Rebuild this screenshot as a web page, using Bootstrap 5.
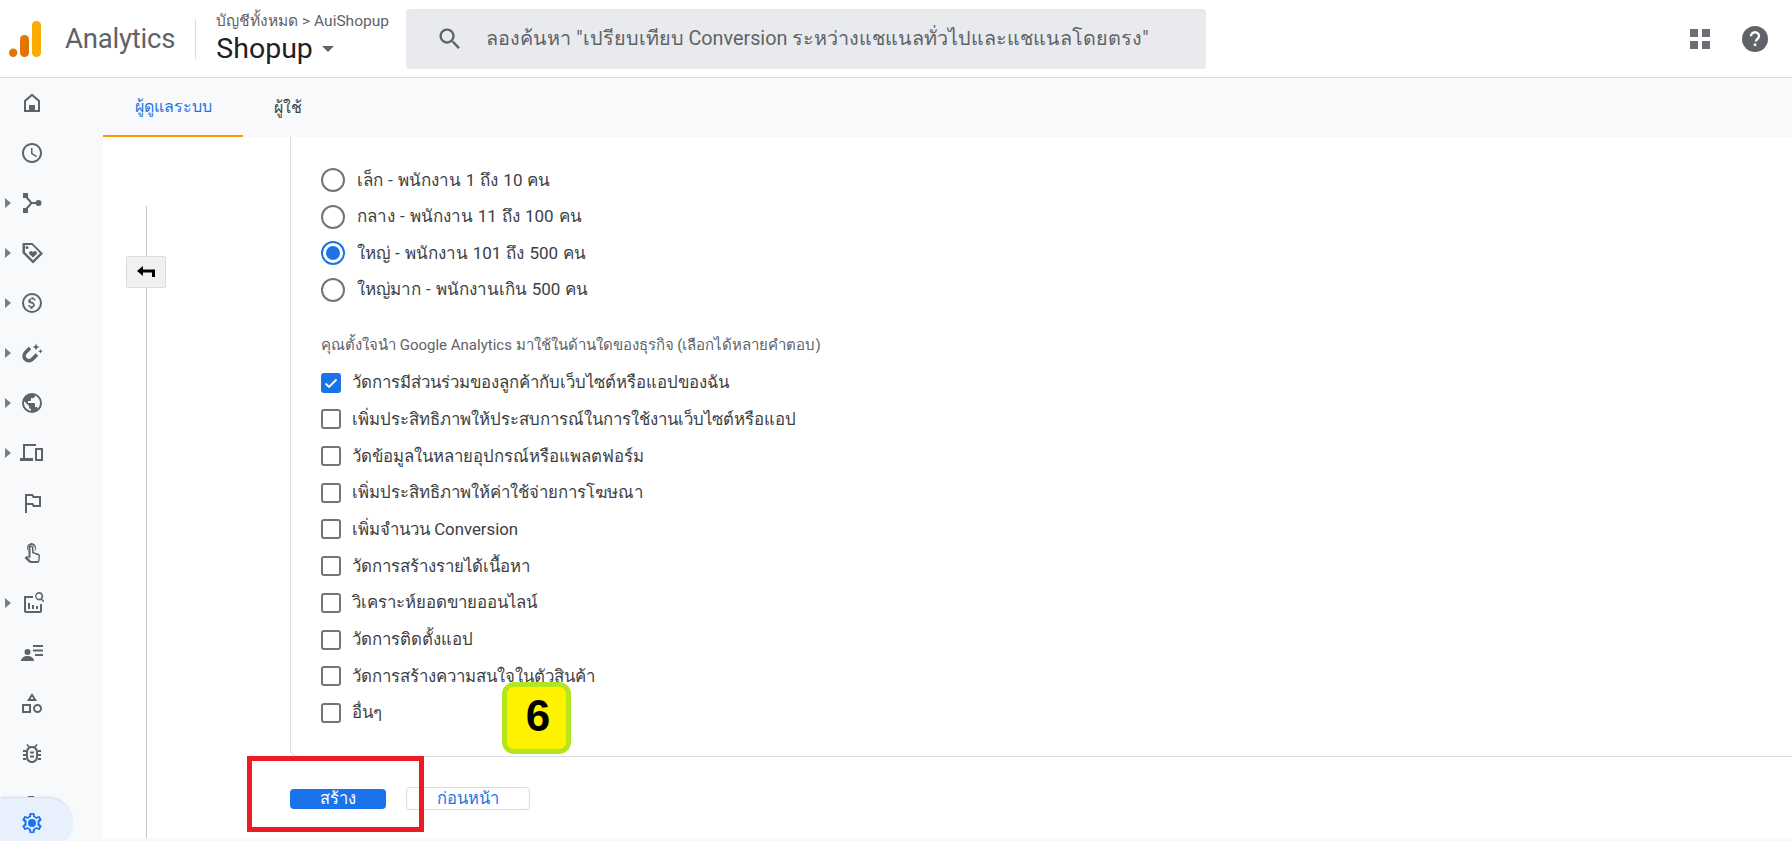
<!doctype html>
<html lang="th">
<head>
<meta charset="utf-8">
<title>Analytics</title>
<link href="https://cdn.jsdelivr.net/npm/bootstrap@5.3.0/dist/css/bootstrap.min.css" rel="stylesheet">
<style>
html,body{height:841px;overflow:hidden}
body{font-family:Roboto,"Noto Sans",sans-serif;color:#3c4043;background:#fff;position:relative}
.ga-head{height:78px;border-bottom:1px solid #dadce0;background:#fff}
.ga-logo{margin-left:9px;width:32px;height:36px;display:block}
.ga-name{font-size:27.5px;color:#5f6368;margin-left:24px;line-height:1;letter-spacing:-.2px}
.ga-divider{width:1px;height:40px;background:#dadce0;margin:0 20px}
.ga-crumb{font-size:15.5px;color:#5f6368;line-height:18px;white-space:nowrap;width:190px}
.ga-prop{font-size:28.5px;color:#202124;line-height:32px;margin-top:3px}
.ga-caret{width:0;height:0;border-left:6px solid transparent;border-right:6px solid transparent;border-top:6px solid #5f6368;margin-left:9px}
.ga-search{width:800px;height:60px;background:#e8eaed;border-radius:4px;padding-left:30px;color:#5f6368;font-size:19.8px;white-space:nowrap}
.ga-search svg{width:28px;height:28px;margin-right:22px;flex:none}
.ga-side{width:103px;flex:none;background:#f8f9fa;height:763px}
.ga-row{height:50px;position:relative;padding-left:20px}
.ga-row svg.ic{width:24px;height:24px;fill:#5f6368}
.ga-row.ga-exp::before{content:"";position:absolute;left:5px;top:20px;border-left:6px solid #6f7f8c;border-top:5px solid transparent;border-bottom:5px solid transparent}
.ga-gear{margin-top:20px;width:73px;height:50px;background:#e8f0fe;border-radius:0 25px 25px 0;box-shadow:0 -2px 2px -1px rgba(60,64,67,.18)}
.ga-gear::before{content:"";position:absolute;left:28px;top:-2px;width:6px;height:1px;background:#5f6368}
.ga-gear svg.ic{fill:#1a73e8}
.ga-tabs{height:59px;background:#f8f9fa}
.ga-tab{height:59px;font-size:16px;display:flex;align-items:center;justify-content:center;color:#3c4043;padding-top:1px}
.ga-tab-on{width:140px;color:#1a73e8;font-weight:500;border-bottom:2px solid #ff9800}
.ga-tab-off{width:90px}
.ga-work{height:701px;min-width:0}
.ga-rail{width:187px;flex:none;height:701px;padding-top:69px;padding-left:43px;position:relative}
.ga-rail-line{width:1px;height:632px;background:#c4c4c4;display:block}
.ga-collapse{position:absolute;left:23px;top:119px;width:40px;height:32px;background:#f1f1f1;border:1px solid #dadce0;border-radius:2px}
.ga-card{border-left:1px solid #dadce0;border-bottom:1px solid #dadce0;border-bottom-left-radius:8px;height:620px;padding:25px 0 0 30px}
.ga-opt{height:36.6px;font-size:17px;color:#3c4043;white-space:nowrap;word-spacing:.8px}
.ga-radio{width:24px;height:24px;border-radius:50%;border:2px solid #757575;margin-right:12px;flex:none;background:#fff}
.ga-radio-on{border-color:#1a73e8;padding:3px}
.ga-radio-on i{display:block;width:14px;height:14px;border-radius:50%;background:#1a73e8}
.ga-q{font-size:15px;color:#5f6368;margin:26.5px 0 9.5px;line-height:20px;white-space:nowrap}
.ga-check{height:36.7px;font-size:16.8px;white-space:nowrap}
.ga-box{width:20px;height:20px;border:2px solid #757575;border-radius:3px;margin-right:11px;flex:none;background:#fff}
.ga-box-on{background:#1a73e8;border-color:#1a73e8}
.ga-box-on svg{display:block;width:16px;height:16px}
.ga-foot{padding-left:187px;padding-top:30px;height:81px}
.ga-btn-main{width:96px;height:20px;padding:0;border:0;background:#1a73e8;color:#fff;font-size:16.5px;font-weight:500;line-height:20px;border-radius:4px;margin-top:2px}
.ga-btn-alt{width:124px;height:23px;padding:0;border:1px solid #dadce0;background:#fff;color:#1a73e8;font-size:16.5px;font-weight:500;line-height:20px;border-radius:4px;margin-left:20px}
.ga-redbox{position:absolute;left:247px;top:756px;width:177px;height:76px;border:5px solid #ed1c24;pointer-events:none}
.ga-step{position:absolute;left:502px;top:682px;width:69px;height:72px;background:#fff200;border:5px solid #b5e61d;border-radius:12px;font-family:"Liberation Sans",sans-serif;font-weight:700;font-size:44px;color:#000;padding:0 0 4px 3px}
.ga-basel{height:3px;background:#f8f9fa;position:absolute;left:103px;right:0;bottom:0}
</style>
</head>
<body>
<header class="ga-head d-flex align-items-center">
  <svg class="ga-logo" viewBox="0 0 32 36"><rect x="23" width="9" height="36" rx="4.5" fill="#f9ab00"/><rect x="11" y="14" width="9" height="22" rx="4.5" fill="#e37400"/><circle cx="4.2" cy="31.8" r="4.2" fill="#e37400"/></svg>
  <span class="ga-name">Analytics</span>
  <span class="ga-divider"></span>
  <div>
    <div class="ga-crumb">บัญชีทั้งหมด &gt; AuiShopup</div>
    <div class="ga-prop d-flex align-items-center">Shopup<span class="ga-caret"></span></div>
  </div>
  <div class="ga-search d-flex align-items-center">
    <svg viewBox="0 0 24 24" fill="#5f6368"><path d="M15.5 14h-.79l-.28-.27C15.41 12.59 16 11.11 16 9.5 16 5.91 13.09 3 9.5 3S3 5.91 3 9.5 5.91 16 9.5 16c1.61 0 3.09-.59 4.23-1.57l.27.28v.79l5 4.99L20.49 19l-4.99-5zm-6 0C7.01 14 5 11.99 5 9.5S7.01 5 9.5 5 14 7.01 14 9.5 11.99 14 9.5 14z"/></svg>
    <span>ลองค้นหา "เปรียบเทียบ Conversion ระหว่างแชแนลทั่วไปและแชแนลโดยตรง"</span>
  </div>
  <svg class="ms-auto" width="20" height="20" viewBox="0 0 20 20" fill="#6b6e72"><rect width="8" height="8"/><rect x="12" width="8" height="8"/><rect y="12" width="8" height="8"/><rect x="12" y="12" width="8" height="8"/></svg>
  <svg style="margin:0 24px 0 32px" width="26" height="26" viewBox="0 0 26 26"><circle cx="13" cy="13" r="13" fill="#5f6368"/><path d="M9 10.2a4 4 0 0 1 8 0c0 2.6-3.1 2.6-3.1 5.4" fill="none" stroke="#fff" stroke-width="2.4"/><rect x="11.7" y="17.5" width="2.6" height="2.6" fill="#fff"/></svg>
</header>
<div class="d-flex">
  <nav class="ga-side">
    <div class="ga-row d-flex align-items-center"><svg class="ic" viewBox="0 0 24 24"><path d="M12 2.5 4 9.5V21h16V9.5zM18 19h-3v-5H9v5H6v-8.6l6-5.2 6 5.2z"/></svg></div>
    <div class="ga-row d-flex align-items-center"><svg class="ic" viewBox="0 0 24 24"><path d="M11.99 2C6.47 2 2 6.48 2 12s4.47 10 9.99 10C17.52 22 22 17.52 22 12S17.52 2 11.99 2zM12 20c-4.42 0-8-3.58-8-8s3.58-8 8-8 8 3.58 8 8-3.58 8-8 8zm.5-13H11v6l5.25 3.15.75-1.23-4.5-2.67z"/></svg></div>
    <div class="ga-row ga-exp d-flex align-items-center"><svg class="ic" viewBox="0 0 24 24"><rect x="3" y="2" width="5" height="5"/><rect x="3" y="17" width="5" height="5"/><circle cx="18.5" cy="12" r="3"/><path d="M6 4.2 12 11h7v2h-7l-6 6.8-1.5-1.3 5.6-6.5-5.6-6.500z"/></svg></div>
    <div class="ga-row ga-exp d-flex align-items-center"><svg class="ic" viewBox="0 0 24 24"><path d="M3 2h9.400L23 12.600 13 22.500 2.500 12V2.500zm2 2v7.200l8 8 7-7-8-8.200z"/><circle cx="7" cy="6.500" r="1.500"/><path d="M13 16.500l-3.500-3.300a2 2 0 0 1 2.800-2.800l.7.700.7-.7a2 2 0 0 1 2.800 2.800z"/></svg></div>
    <div class="ga-row ga-exp d-flex align-items-center"><svg class="ic" viewBox="0 0 24 24"><path d="M12 2a10 10 0 1 0 0 20 10 10 0 0 0 0-20zm0 18a8 8 0 1 1 0-16 8 8 0 0 1 0 16z"/><path d="M12.800 11.100c-1.800-.5-2.300-.9-2.300-1.600 0-.8.700-1.300 1.800-1.300 1.200 0 1.600.6 1.700 1.400h1.500c0-1.100-.7-2.200-2.100-2.500V6.200h-2v1.400C9.100 7.900 8.200 8.800 8.200 9.900c0 1.500 1.200 2.200 3 2.600 1.600.4 2 1 2 1.600 0 .5-.3 1.200-1.800 1.200-1.300 0-1.900-.6-2-1.400H8c.1 1.500 1.200 2.300 2.500 2.600v1.400h2v-1.300c1.400-.3 2.400-1.100 2.400-2.500 0-1.900-1.600-2.600-2.100-2.900z"/></svg></div>
    <div class="ga-row ga-exp d-flex align-items-center"><svg class="ic" viewBox="0 0 24 24"><path d="M10 7 5.500 11.500A4.800 4.800 0 0 0 12.300 18.300L17 13.500" fill="none" stroke="#5f6368" stroke-width="3.600"/><path d="M16 2.500l1 2.500 2.500 1-2.500 1-1 2.500-1-2.500L12.500 6l2.500-1zM20.500 8l.7 1.600 1.600.7-1.600.7-.7 1.600-.7-1.600-1.600-.7 1.600-.7z"/></svg></div>
    <div class="ga-row ga-exp d-flex align-items-center"><svg class="ic" viewBox="0 0 24 24"><path d="M12 2a10 10 0 1 0 0 20 10 10 0 0 0 0-20zM4 12c0-.6.1-1.200.2-1.800L9 15v1a2 2 0 0 0 2 2v2a8 8 0 0 1-7-8zm13.900 5.400A2 2 0 0 0 16 16h-1v-3a1 1 0 0 0-1-1H8v-2h2a1 1 0 0 0 1-1V7h2a2 2 0 0 0 2-2v-.4a8 8 0 0 1 2.900 12.800z"/></svg></div>
    <div class="ga-row ga-exp d-flex align-items-center"><svg class="ic" viewBox="0 0 24 24"><path d="M3 3h13v2H5v12h8v3H0v-3h3zM15 7h8v13h-8zm2 2v9h4V9z"/></svg></div>
    <div class="ga-row d-flex align-items-center"><svg class="ic" viewBox="0 0 24 24"><path d="M14 5 13 3H5v19h2v-8h5l1 2h8V5zm5 9h-4.800l-1-2H7V5h4.800l1 2H19z"/></svg></div>
    <div class="ga-row d-flex align-items-center"><svg class="ic" viewBox="0 0 24 24"><path d="M11 2a5 5 0 0 1 3.500 8.600V9.500a3.500 3.500 0 1 0-6 0v1.100A5 5 0 0 1 11 2z"/><path d="M11 4.500a2.500 2.500 0 0 1 2.500 2.500v4l5 1.800c1 .4 1.500 1.200 1.500 2.200l-.5 5c-.2 1-1 2-2.500 2h-6c-1 0-1.700-.4-2.300-1L4.500 17l1.300-1.300c.5-.5 1-.6 1.700-.4l1 .3V7A2.500 2.500 0 0 1 11 4.500zm-.5 2V17l-3-.700 3.200 3.500c.2.200.5.200.8.200h6c.4 0 .6-.3.700-.6l.4-4.400c0-.3-.1-.5-.4-.6l-6.200-2.300V6.500a.5.500 0 0 0-1 0z"/></svg></div>
    <div class="ga-row ga-exp d-flex align-items-center"><svg class="ic" viewBox="0 0 24 24"><path d="M4 5h9v2H6v13h14v-7h2v7a2 2 0 0 1-2 2H6a2 2 0 0 1-2-2z"/><path d="M8 12h2v6H8zM12 14h2v4h-2zM16 15h2v3h-2z"/><path d="M19 1a4.200 4.200 0 0 1 3.200 6.900l2.300 2.300-1.100 1.100-2.300-2.300A4.200 4.200 0 1 1 19 1zm0 1.700a2.500 2.500 0 1 0 0 5 2.500 2.500 0 0 0 0-5z"/></svg></div>
    <div class="ga-row d-flex align-items-center"><svg class="ic" viewBox="0 0 24 24"><circle cx="7.500" cy="11" r="3"/><path d="M1 20c0-3 3-5 6.500-5s6.500 2 6.500 5zM13 4h10v2H13zM13 8.500h10v2H13zM15 13h8v2h-8z"/></svg></div>
    <div class="ga-row d-flex align-items-center"><svg class="ic" viewBox="0 0 24 24"><path d="M12 2l5 8H7zm0 3.500L10.600 8h2.800zM2 13h9v9H2zm2 2v5h5v-5zM17.500 13a4.500 4.500 0 1 1 0 9 4.500 4.500 0 0 1 0-9zm0 2a2.500 2.500 0 1 0 0 5 2.500 2.500 0 0 0 0-5z"/></svg></div>
    <div class="ga-row d-flex align-items-center"><svg class="ic" viewBox="0 0 24 24"><path d="M12 5c3.500 0 6 2.500 6 6v5c0 3.500-2.500 6-6 6s-6-2.500-6-6v-5c0-3.500 2.500-6 6-6zm0 2c-2.300 0-4 1.700-4 4v5c0 2.300 1.700 4 4 4s4-1.700 4-4v-5c0-2.300-1.700-4-4-4z"/><path d="M10 10.500h4v2h-4zM10 14.500h4v2h-4zM3 9h3v2H3zM18 9h3v2h-3zM3 13h3v2H3zM18 13h3v2h-3zM3 17h3v2H3zM18 17h3v2h-3zM7.500 3l2.500 2.500-1.300 1.100L6.200 4zM16.500 3l-2.500 2.500 1.300 1.100L17.800 4z"/></svg></div>
    <div class="ga-row ga-gear d-flex align-items-center"><svg class="ic" viewBox="0 0 24 24"><path fill-rule="evenodd" d="M19.430 12.980c.04-.32.07-.64.07-.98s-.03-.66-.07-.98l2.110-1.650c.19-.15.24-.42.12-.64l-2-3.460c-.12-.22-.39-.3-.61-.22l-2.490 1c-.52-.4-1.080-.73-1.690-.98l-.38-2.650C14.460 2.180 14.250 2 14 2h-4c-.25 0-.46.18-.49.42l-.38 2.650c-.61.25-1.170.59-1.690.98l-2.490-1c-.23-.09-.49 0-.61.22l-2 3.460c-.13.22-.07.49.12.64l2.110 1.650c-.04.32-.07.65-.07.98s.03.66.07.98l-2.110 1.650c-.19.15-.24.42-.12.64l2 3.460c.12.22.39.3.61.22l2.490-1c.52.4 1.080.73 1.690.98l.38 2.650c.03.24.24.42.49.42h4c.25 0 .46-.18.49-.42l.38-2.650c.61-.25 1.170-.59 1.690-.98l2.490 1c.23.09.49 0 .61-.22l2-3.460c.12-.22.07-.49-.12-.64zM17.500 12c0 .4-.04.73-.1 1.170l-.14 1.130.9.700 1.080.84-.7 1.210-1.270-.51-1.040-.42-.9.680c-.43.32-.84.56-1.250.73l-1.060.43-.16 1.130-.2 1.350h-1.400l-.19-1.350-.16-1.130-1.060-.43c-.43-.18-.83-.41-1.230-.71l-.91-.7-1.060.43-1.270.51-.7-1.210 1.080-.84.89-.7-.14-1.130C6.540 12.730 6.500 12.400 6.500 12s.04-.73.1-1.170l.14-1.130-.89-.7-1.080-.84.7-1.210 1.270.51 1.040.42.9-.68c.43-.32.84-.56 1.250-.73l1.060-.43.16-1.130.2-1.350h1.390l.19 1.350.16 1.130 1.060.43c.43.18.83.41 1.230.71l.91.7 1.060-.43 1.270-.51.7 1.210-1.070.85-.89.7.14 1.130c.06.44.1.76.1 1.160z"/><circle cx="12" cy="12" r="4"/></svg></div>
  </nav>
  <main class="flex-grow-1" style="min-width:0">
    <div class="ga-tabs d-flex">
      <div class="ga-tab ga-tab-on">ผู้ดูแลระบบ</div>
      <div class="ga-tab ga-tab-off">ผู้ใช้</div>
    </div>
    <div class="ga-work d-flex">
      <div class="ga-rail">
        <span class="ga-rail-line"></span>
        <div class="ga-collapse d-flex align-items-center justify-content-center">
          <svg width="18" height="12" viewBox="0 0 18 12"><path d="M0 5l6-5v3.500h12V11h-3V6.500H6V10z" fill="#000"/></svg>
        </div>
      </div>
      <div class="flex-grow-1" style="min-width:0">
        <div class="ga-card">
          <div class="ga-opt d-flex align-items-center"><span class="ga-radio"></span>เล็ก - พนักงาน 1 ถึง 10 คน</div>
          <div class="ga-opt d-flex align-items-center"><span class="ga-radio"></span>กลาง - พนักงาน 11 ถึง 100 คน</div>
          <div class="ga-opt d-flex align-items-center"><span class="ga-radio ga-radio-on"><i></i></span>ใหญ่ - พนักงาน 101 ถึง 500 คน</div>
          <div class="ga-opt d-flex align-items-center"><span class="ga-radio"></span>ใหญ่มาก - พนักงานเกิน 500 คน</div>
          <div class="ga-q">คุณตั้งใจนำ Google Analytics มาใช้ในด้านใดของธุรกิจ (เลือกได้หลายคำตอบ)</div>
          <div class="ga-check d-flex align-items-center"><span class="ga-box ga-box-on"><svg viewBox="0 0 16 16"><path d="M2.500 8.500 6 12l7.500-7.500" fill="none" stroke="#fff" stroke-width="1.800"/></svg></span>วัดการมีส่วนร่วมของลูกค้ากับเว็บไซต์หรือแอปของฉัน</div>
          <div class="ga-check d-flex align-items-center"><span class="ga-box"></span>เพิ่มประสิทธิภาพให้ประสบการณ์ในการใช้งานเว็บไซต์หรือแอป</div>
          <div class="ga-check d-flex align-items-center"><span class="ga-box"></span>วัดข้อมูลในหลายอุปกรณ์หรือแพลตฟอร์ม</div>
          <div class="ga-check d-flex align-items-center"><span class="ga-box"></span>เพิ่มประสิทธิภาพให้ค่าใช้จ่ายการโฆษณา</div>
          <div class="ga-check d-flex align-items-center"><span class="ga-box"></span>เพิ่มจำนวน Conversion</div>
          <div class="ga-check d-flex align-items-center"><span class="ga-box"></span>วัดการสร้างรายได้เนื้อหา</div>
          <div class="ga-check d-flex align-items-center"><span class="ga-box"></span>วิเคราะห์ยอดขายออนไลน์</div>
          <div class="ga-check d-flex align-items-center"><span class="ga-box"></span>วัดการติดตั้งแอป</div>
          <div class="ga-check d-flex align-items-center"><span class="ga-box"></span>วัดการสร้างความสนใจในตัวสินค้า</div>
          <div class="ga-check d-flex align-items-center"><span class="ga-box"></span>อื่นๆ</div>
        </div>
      </div>
    </div>
  </main>
</div>
<div class="ga-foot d-flex align-items-start" style="position:absolute;left:103px;top:757px">
  <button class="ga-btn-main" type="button">สร้าง</button>
  <button class="ga-btn-alt" type="button">ก่อนหน้า</button>
</div>
<div class="ga-basel"></div>
<div class="ga-redbox"></div>
<div class="ga-step d-flex align-items-center justify-content-center">6</div>
</body>
</html>
